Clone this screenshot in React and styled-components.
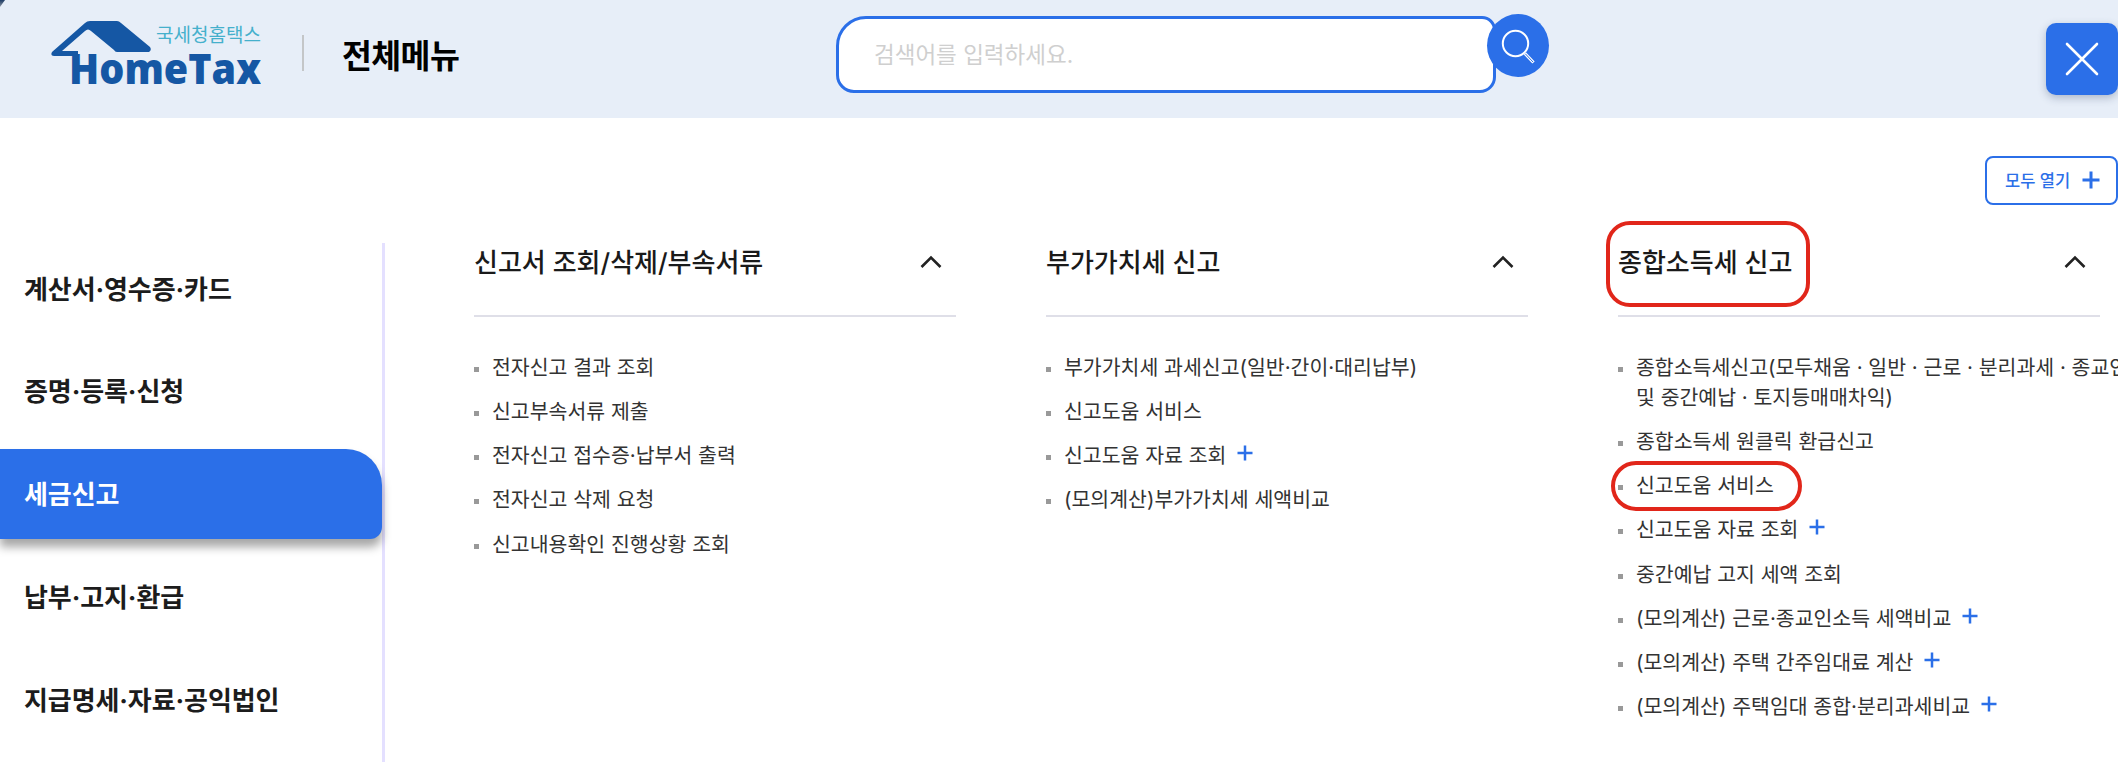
import React from "react";
import styled, { createGlobalStyle } from "styled-components";

const Blue = "#2b6fe8";
const Font = `Inter, "Noto Sans CJK KR", "Noto Sans", sans-serif`;

const GlobalStyle = createGlobalStyle`
  html, body {
    margin: 0;
    padding: 0;
    background: #fff;
    font-family: ${Font};
    overflow: hidden;
  }
`;

const Page = styled.div`
  width: 2118px;
  height: 762px;
  overflow: hidden;
  background: #fff;
`;

const Header = styled.header`
  position: relative;
  display: flex;
  align-items: flex-start;
  height: 118px;
  padding-left: 51px;
  background: #e7eef8;
  box-sizing: border-box;
`;

const CornerMark = styled.span`
  position: absolute;
  top: 0;
  left: 0;
  width: 5px;
  height: 7px;
  background: linear-gradient(#1d3c66, #8b95a3);
  clip-path: polygon(0 0, 100% 0, 0 100%);
`;

const LogoWrap = styled.div`
  width: 210px;
  height: 117px;
  flex-shrink: 0;
`;

const Divider = styled.span`
  width: 2px;
  height: 36px;
  margin: 35px 0 0 41px;
  background: #c4c6c8;
  flex-shrink: 0;
`;

const Title = styled.h1`
  width: 120px;
  margin: 34px 0 0 38px;
  font-size: 32.5px;
  line-height: 46px;
  font-weight: 700;
  color: #000;
  letter-spacing: -0.6px;
  white-space: nowrap;
`;

const SearchWrap = styled.div`
  position: relative;
  width: 713px;
  height: 77px;
  margin: 16px 0 0 374px;
  flex-shrink: 0;
`;

const SearchInput = styled.input`
  display: block;
  width: 660px;
  height: 77px;
  padding: 0 0 0 35px;
  box-sizing: border-box;
  border: 3px solid ${Blue};
  border-radius: 30px 14px 16px 18px;
  background: #fff;
  outline: none;
  font-family: ${Font};
  font-size: 22.5px;
  color: #333;

  &::placeholder {
    color: #cfcfcf;
    opacity: 1;
  }
`;

const SearchButton = styled.button`
  position: absolute;
  top: -2px;
  right: 0;
  width: 62px;
  height: 63px;
  padding: 0;
  border: 0;
  border-radius: 50%;
  background: ${Blue};
  display: flex;
  align-items: center;
  justify-content: center;
`;

const CloseButton = styled.button`
  width: 72px;
  height: 72px;
  margin: 23px 0 0 auto;
  padding: 0;
  border: 0;
  border-radius: 10px;
  background: ${Blue};
  box-shadow: 0 3px 8px rgba(40, 60, 100, 0.3);
  display: flex;
  align-items: center;
  justify-content: center;
  flex-shrink: 0;
`;

const Toolbar = styled.div`
  display: flex;
  justify-content: flex-end;
  padding-top: 38px;
  height: 49px;
`;

const OpenAll = styled.button`
  display: flex;
  align-items: center;
  width: 133px;
  height: 49px;
  padding: 0 0 1px 18px;
  box-sizing: border-box;
  border: 2px solid ${Blue};
  border-radius: 8px;
  background: #fff;
  color: ${Blue};
  font-family: ${Font};
  font-size: 16.5px;
  font-weight: 500;
  white-space: nowrap;
  gap: 12px;
`;

const Body = styled.div`
  display: flex;
  margin-top: 38px;
`;

const Sidebar = styled.nav`
  display: flex;
  flex-direction: column;
  gap: 12.75px;
  width: 385px;
  height: 519px;
  border-right: 3px solid #e4e0ff;
  box-sizing: border-box;
  flex-shrink: 0;
`;

const SideItem = styled.div`
  display: flex;
  align-items: center;
  height: 90px;
  padding: 0 0 2px 24px;
  box-sizing: border-box;
  flex-shrink: 0;
  font-size: 26px;
  font-weight: 700;
  letter-spacing: -0.1px;
  color: ${(p) => (p.$active ? "#fff" : "#1c1c1c")};
  background: ${(p) => (p.$active ? Blue : "transparent")};
  border-radius: ${(p) => (p.$active ? "0 36px 12px 0" : "0")};
  box-shadow: ${(p) => (p.$active ? "0 8px 10px rgba(0, 0, 0, 0.35)" : "none")};
`;

const Columns = styled.div`
  display: grid;
  grid-template-columns: repeat(3, 482px);
  column-gap: 90px;
  padding-left: 89px;
`;

const Column = styled.section``;

const ColumnHead = styled.div`
  position: relative;
  display: flex;
  justify-content: space-between;
  align-items: flex-start;
  height: 72px;
  border-bottom: 2px solid #dfdfe8;
`;

const ColumnTitle = styled.h2`
  margin: 0;
  font-size: 26px;
  line-height: 40px;
  font-weight: 500;
  color: #1a1a1a;
  white-space: nowrap;
`;

const Chevron = styled.svg`
  margin: 12px 14px 0 0;
`;

const List = styled.ul`
  list-style: none;
  margin: 0;
  padding: 35.5px 0 0;
  display: flex;
  flex-direction: column;
  gap: 14.25px;
`;

const Item = styled.li`
  position: relative;
  display: flex;
  align-items: flex-start;
  font-size: 20.5px;
  line-height: 30px;
  color: #333;
  white-space: nowrap;
`;

const Bullet = styled.span`
  width: 5px;
  height: 5px;
  margin: 14px 13px 0 0;
  background: #999;
  flex-shrink: 0;
`;

const PlusMark = styled.svg`
  margin: 4px 0 0 11px;
  flex-shrink: 0;
`;

// 빨간 표시: 캡처 위에 덧그린 강조선
const Highlight = styled.span`
  position: absolute;
  top: ${(p) => p.$top}px;
  left: ${(p) => p.$left}px;
  width: ${(p) => p.$width}px;
  height: ${(p) => p.$height}px;
  box-sizing: border-box;
  border: 4px solid #e1261a;
  border-radius: ${(p) => p.$radius}px;
  pointer-events: none;
`;

const sideItems = [
  { label: "계산서·영수증·카드" },
  { label: "증명·등록·신청" },
  { label: "세금신고", active: true },
  { label: "납부·고지·환급" },
  { label: "지급명세·자료·공익법인" },
];

const columns = [
  {
    title: "신고서 조회/삭제/부속서류",
    items: [
      { text: "전자신고 결과 조회" },
      { text: "신고부속서류 제출" },
      { text: "전자신고 접수증·납부서 출력" },
      { text: "전자신고 삭제 요청" },
      { text: "신고내용확인 진행상황 조회" },
    ],
  },
  {
    title: "부가가치세 신고",
    items: [
      { text: "부가가치세 과세신고(일반·간이·대리납부)" },
      { text: "신고도움 서비스" },
      { text: "신고도움 자료 조회", plus: true },
      { text: "(모의계산)부가가치세 세액비교" },
    ],
  },
  {
    title: "종합소득세 신고",
    marked: true,
    items: [
      {
        text: "종합소득세신고(모두채움 · 일반 · 근로 · 분리과세 · 종교인소득",
        second: "및 중간예납 · 토지등매매차익)",
      },
      { text: "종합소득세 원클릭 환급신고" },
      { text: "신고도움 서비스", marked: true },
      { text: "신고도움 자료 조회", plus: true },
      { text: "중간예납 고지 세액 조회" },
      { text: "(모의계산) 근로·종교인소득 세액비교", plus: true },
      { text: "(모의계산) 주택 간주임대료 계산", plus: true },
      { text: "(모의계산) 주택임대 종합·분리과세비교", plus: true },
    ],
  },
];

function Logo() {
  return (
    <svg width="210" height="117" viewBox="51 0 210 117">
      <path
        d="M52 52 L85 23 Q87 21 90 21 L117 21 Q119 21 121 23 L150 47 Q152 50 149 52 L117 52 Q115 52 114 50 L91 31 Q88 28 85 31 L62 51 L78 51 L78 56 L54 56 Q50 56 52 52 Z"
        fill="#1557a4"
      />
      <text x="156" y="42" fontFamily={Font} fontSize="19" fill="#45b0cc" textLength="105" lengthAdjust="spacingAndGlyphs">
        국세청홈택스
      </text>
      <text x="69" y="84" fontFamily={`"Open Sans", sans-serif`} fontWeight="800" fontSize="43" fill="#1557a4" textLength="192" lengthAdjust="spacingAndGlyphs">
        HomeTax
      </text>
    </svg>
  );
}

function Plus({ size = 16 }) {
  return (
    <PlusMark width={size} height={size} viewBox="0 0 16 16">
      <path d="M8 0.5V15.5M0.5 8H15.5" stroke={Blue} strokeWidth="2.5" fill="none" />
    </PlusMark>
  );
}

function App() {
  return (
    <Page>
      <GlobalStyle />
      <Header>
        <CornerMark />
        <LogoWrap>
          <Logo />
        </LogoWrap>
        <Divider />
        <Title>전체메뉴</Title>
        <SearchWrap>
          <SearchInput placeholder="검색어를 입력하세요." />
          <SearchButton aria-label="검색">
            <svg width="40" height="40" viewBox="0 0 40 40" fill="none">
              <circle cx="17.5" cy="17.5" r="12.7" stroke="#fff" strokeWidth="2" />
              <path d="M27 27.5 L35.5 36.5" stroke="#fff" strokeWidth="3.2" />
              <path d="M27.5 28 L35 36" stroke="#2b6fe8" strokeWidth="1" />
            </svg>
          </SearchButton>
        </SearchWrap>
        <CloseButton aria-label="닫기">
          <svg width="34" height="34" viewBox="0 0 34 34" fill="none">
            <path d="M2 2L32 32M32 2L2 32" stroke="#fff" strokeWidth="2.6" strokeLinecap="round" />
          </svg>
        </CloseButton>
      </Header>
      <Toolbar>
        <OpenAll>
          모두 열기
          <svg width="18" height="18" viewBox="0 0 18 18">
            <path d="M9 0.5V17.5M0.5 9H17.5" stroke={Blue} strokeWidth="3" fill="none" />
          </svg>
        </OpenAll>
      </Toolbar>
      <Body>
        <Sidebar>
          {sideItems.map((item) => (
            <SideItem key={item.label} $active={item.active}>
              {item.label}
            </SideItem>
          ))}
        </Sidebar>
        <Columns>
          {columns.map((col) => (
            <Column key={col.title}>
              <ColumnHead>
                <ColumnTitle>{col.title}</ColumnTitle>
                <Chevron width="22" height="14" viewBox="0 0 22 14" fill="none">
                  <path d="M1.5 12L11 2.5L20.5 12" stroke="#222" strokeWidth="2.6" />
                </Chevron>
                {col.marked && <Highlight $top={-22} $left={-12} $width={204} $height={86} $radius={24} />}
              </ColumnHead>
              <List>
                {col.items.map((item) => (
                  <Item key={item.text}>
                    <Bullet />
                    <span>
                      {item.text}
                      {item.second && (
                        <>
                          <br />
                          {item.second}
                        </>
                      )}
                    </span>
                    {item.plus && <Plus />}
                    {item.marked && <Highlight $top={-10} $left={-7} $width={191} $height={50} $radius={25} />}
                  </Item>
                ))}
              </List>
            </Column>
          ))}
        </Columns>
      </Body>
    </Page>
  );
}

export default App;
